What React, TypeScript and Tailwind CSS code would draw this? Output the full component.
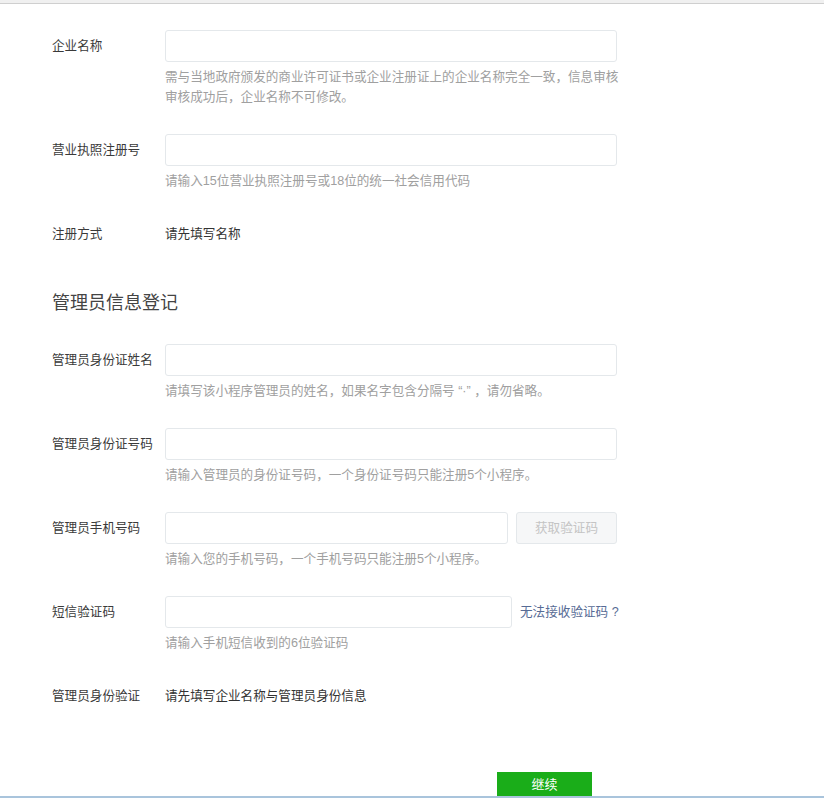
import type { ReactNode } from 'react'

const font = { fontFamily: '"Liberation Sans", "Noto Sans CJK SC", sans-serif' }

function Row({ label, children, hint }: { label: string; children: ReactNode; hint?: ReactNode }) {
  return (
    <div className="flex mb-[27px]">
      <div className="w-[113px] shrink-0 leading-[32px] text-[12.6px] text-[#3a3a3a]">{label}</div>
      <div>
        {children}
        {hint && <div className="mt-[5px] text-[12.6px] leading-[20px] text-[#a0a0a0] whitespace-nowrap">{hint}</div>}
      </div>
    </div>
  )
}

function Input({ w = 'w-[452px]' }: { w?: string }) {
  return <input className={`${w} h-[32px] border border-[#e4e8eb] rounded-[3px] bg-white outline-none px-2`} />
}

export default function App() {
  return (
    <div style={font} className="w-[824px] bg-white">
      <div className="h-[796px] overflow-hidden">
        <div className="h-[4px] bg-[#f0f0f0] border-b border-[#cfcfcf]" />
        <div className="pl-[52px] pt-[26px]">
          <Row
            label="企业名称"
            hint={<>需与当地政府颁发的商业许可证书或企业注册证上的企业名称完全一致，信息审核<br />审核成功后，企业名称不可修改。</>}
          >
            <Input />
          </Row>
          <Row label="营业执照注册号" hint="请输入15位营业执照注册号或18位的统一社会信用代码">
            <Input />
          </Row>
          <div className="flex leading-[32px] text-[12.6px]">
            <div className="w-[113px] text-[#3a3a3a]">注册方式</div>
            <div className="text-[#333]">请先填写名称</div>
          </div>

          <h2 className="mt-[41px] mb-[29px] text-[18px] leading-[24px] text-[#444] font-normal">管理员信息登记</h2>

          <Row label="管理员身份证姓名" hint="请填写该小程序管理员的姓名，如果名字包含分隔号 “·” ，请勿省略。">
            <Input />
          </Row>
          <Row label="管理员身份证号码" hint="请输入管理员的身份证号码，一个身份证号码只能注册5个小程序。">
            <Input />
          </Row>
          <Row label="管理员手机号码" hint="请输入您的手机号码，一个手机号码只能注册5个小程序。">
            <div className="flex gap-[8px]">
              <Input w="w-[343px]" />
              <button className="w-[101px] h-[32px] border border-[#e4e8eb] rounded-[3px] bg-[#f6f7f8] text-[12.6px] text-[#c4c4c4]">
                获取验证码
              </button>
            </div>
          </Row>
          <Row label="短信验证码" hint="请输入手机短信收到的6位验证码">
            <div className="flex items-center gap-[8px]">
              <Input w="w-[347px]" />
              <a className="text-[12.6px] text-[#576b95] whitespace-nowrap">无法接收验证码 ?</a>
            </div>
          </Row>
          <div className="flex leading-[32px] text-[12.6px]">
            <div className="w-[113px] text-[#3a3a3a]">管理员身份验证</div>
            <div className="text-[#333]">请先填写企业名称与管理员身份信息</div>
          </div>

          <div className="mt-[60px] pl-[445px]">
            <button className="w-[95px] h-[36px] bg-[#1aad19] text-white text-[13px] leading-[20px] pt-[3px] flex justify-center items-start">
              继续
            </button>
          </div>
        </div>
      </div>
      <div className="h-[2px] bg-[#a9c4dc]" />
    </div>
  )
}
